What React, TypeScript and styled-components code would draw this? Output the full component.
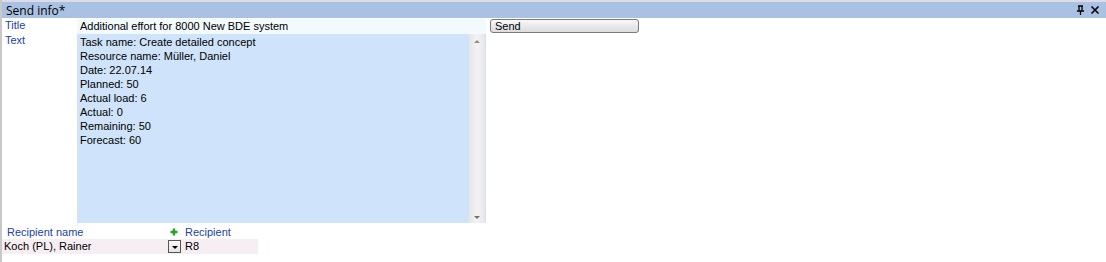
import React from "react";
import styled, { createGlobalStyle } from "styled-components";

const Global = createGlobalStyle`
  html, body {
    margin: 0;
    padding: 0;
    background: #ffffff;
  }
  body {
    font-family: "Liberation Sans", Arial, sans-serif;
    font-size: 11px;
    color: #000;
  }
`;

const Panel = styled.div`
  width: 1106px;
  height: 262px;
  box-sizing: border-box;
  border-left: 2px solid #c8c8c8;
  display: flex;
  flex-direction: column;
  overflow: hidden;
`;

const Header = styled.div`
  height: 18px;
  box-sizing: border-box;
  border-top: 2px solid #dcdce8;
  background: #a9c1e2;
  display: flex;
  align-items: center;
  padding: 0 4px 0 4px;
  font-family: "Open Sans", "Liberation Sans", sans-serif;
  font-size: 12px;
  color: #000;
`;

const HeaderTitle = styled.span`
  flex: 1;
`;

const HeaderIcon = styled.span`
  display: flex;
  align-items: center;
  justify-content: center;
  width: 14px;
  height: 14px;
  margin-left: 1px;
`;

const Form = styled.div`
  display: grid;
  grid-template-columns: 75px 409px 153px;
  grid-template-rows: 15px 189px;
  margin-top: 1px;
`;

const Label = styled.div`
  color: #1a3fa8;
  padding-left: 3px;
  font-size: 11px;
  line-height: 13px;
`;

const TitleInput = styled.div`
  background: #f2fafe;
  padding-left: 3px;
  font-size: 11px;
  line-height: 15px;
  white-space: nowrap;
`;

const ButtonCell = styled.div`
  padding: 0 0 0 4px;
`;

const SendButton = styled.div`
  width: 149px;
  height: 14px;
  box-sizing: border-box;
  border: 1px solid #7a7a7a;
  border-radius: 3px;
  background: linear-gradient(#f8f8f8, #dcdcdc);
  font-size: 11px;
  line-height: 12px;
  padding-left: 4px;
`;

const TextArea = styled.div`
  grid-column: 2;
  display: flex;
  background: #cfe4fa;
`;

const TextLines = styled.div`
  flex: 1;
  padding: 1px 0 0 3px;
  font-size: 11px;
  line-height: 14px;
`;

const ScrollBar = styled.div`
  width: 16px;
  margin-right: 1px;
  background: linear-gradient(90deg, #e6e6e6, #f4f2f2 50%, #e8e6e6);
  display: flex;
  flex-direction: column;
  justify-content: space-between;
  align-items: center;
  padding: 6px 0 4px;
  box-sizing: border-box;
`;

const Arrow = styled.span<{ $down?: boolean; $dark?: boolean }>`
  width: 0;
  height: 0;
  border-left: 3px solid transparent;
  border-right: 3px solid transparent;
  ${(p) =>
    p.$down
      ? `border-top: 3px solid ${p.$dark ? "#000" : "#707070"};`
      : "border-bottom: 3px solid #909090;"}
`;

const Recipients = styled.div`
  display: grid;
  grid-template-columns: 164px 16px 76px;
  grid-template-rows: 15px 15px;
  width: 256px;
  margin-top: 1px;
`;

const ColHead = styled.div<{ $pad?: number }>`
  color: #1a3fa8;
  font-size: 11px;
  line-height: 14px;
  padding-left: ${(p) => p.$pad ?? 0}px;
  display: flex;
  align-items: center;
`;

const Cell = styled.div<{ $pad?: number }>`
  background: #f6eef2;
  font-size: 11px;
  line-height: 15px;
  padding-left: ${(p) => p.$pad ?? 0}px;
  display: flex;
  align-items: center;
`;

const DropButton = styled.span`
  width: 13px;
  height: 13px;
  box-sizing: border-box;
  border: 1px solid #555;
  background: linear-gradient(#fafafa, #e4e4e4);
  display: flex;
  align-items: center;
  justify-content: center;
  margin-left: 2px;
  padding-top: 2px;
`;

const lines = [
  "Task name: Create detailed concept",
  "Resource name: Müller, Daniel",
  "Date: 22.07.14",
  "Planned: 50",
  "Actual load: 6",
  "Actual: 0",
  "Remaining: 50",
  "Forecast: 60",
];

export default function App() {
  return (
    <>
      <Global />
      <Panel>
        <Header>
          <HeaderTitle>Send info*</HeaderTitle>
          <HeaderIcon>
            <svg width="9" height="10" viewBox="0 0 9 10">
              <path d="M2 1h5M3 1v5M6 1v5M1 6h7M4.5 6v4" stroke="#000" strokeWidth="1.3" fill="none" />
            </svg>
          </HeaderIcon>
          <HeaderIcon>
            <svg width="10" height="10" viewBox="0 0 10 10">
              <path d="M1.5 1.5l7 7M8.5 1.5l-7 7" stroke="#000" strokeWidth="1.6" />
            </svg>
          </HeaderIcon>
        </Header>
        <Form>
          <Label>Title</Label>
          <TitleInput>Additional effort for 8000 New BDE system</TitleInput>
          <ButtonCell>
            <SendButton>Send</SendButton>
          </ButtonCell>
          <Label>Text</Label>
          <TextArea>
            <TextLines>
              {lines.map((l) => (
                <div key={l}>{l}</div>
              ))}
            </TextLines>
            <ScrollBar>
              <Arrow />
              <Arrow $down />
            </ScrollBar>
          </TextArea>
        </Form>
        <Recipients>
          <ColHead $pad={5}>Recipient name</ColHead>
          <ColHead $pad={4}>
            <svg width="8" height="8" viewBox="0 0 8 8">
              <path d="M4 0.5v7M0.5 4h7" stroke="#2aa02a" strokeWidth="2.4" />
            </svg>
          </ColHead>
          <ColHead $pad={3}>Recipient</ColHead>
          <Cell $pad={2}>Koch (PL), Rainer</Cell>
          <Cell>
            <DropButton>
              <Arrow $down $dark />
            </DropButton>
          </Cell>
          <Cell $pad={3}>R8</Cell>
        </Recipients>
      </Panel>
    </>
  );
}
